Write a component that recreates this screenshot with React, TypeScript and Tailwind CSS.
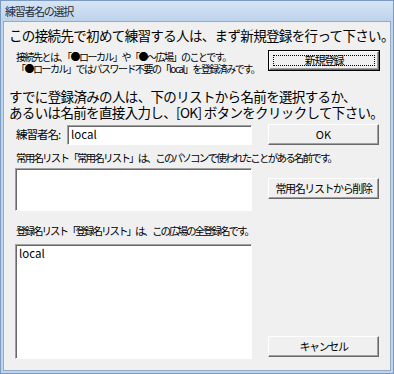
import React from 'react'

const raised =
	'bg-[#f0f0f0] border border-t-white border-l-white border-r-[#696969] border-b-[#696969] shadow-[inset_-1px_-1px_0_#a0a0a0] flex items-center justify-center text-[11px] tracking-[-1.4px] text-black'

const sunken =
	'bg-white border border-t-[#a0a0a0] border-l-[#a0a0a0] border-r-white border-b-white shadow-[inset_1px_1px_0_#696969]'

function App() {
	return (
		<div className="w-[394px] h-[374px] flex flex-col bg-[#c0d5ec] border border-[#7b9bc2] font-['Noto_Sans_CJK_JP',sans-serif] text-black">
			<div className="h-[20px] flex items-center pl-[4px] bg-gradient-to-b from-[#d6e5f5] to-[#bdd3eb]">
				<span className="text-[11px] tracking-[-1.3px] text-[#1e2a3a]">練習者名の選択</span>
			</div>

			<div className="flex-1 mx-[2px] mb-[2px] border border-[#93abc8] bg-[#f0f0f0] flex flex-col">
				<h1 className="mt-[5px] pl-[5px] text-[13.5px] leading-[16px] tracking-[-0.65px] whitespace-nowrap">
					この接続先で初めて練習する人は、まず新規登録を行って下さい。
				</h1>

				<div className="mt-[7px] flex items-start pl-[12px] pr-[10px]">
					<div className="mt-[1px] text-[10px] leading-[12px] tracking-[-1.5px] whitespace-nowrap">
						<div>接続先とは、「●ローカル」や「●～広場」のことです。</div>
						<div>「●ローカル」ではパスワード不要の「local」を登録済みです。</div>
					</div>
					<div className="ml-auto w-[112px] h-[21px] border border-black">
						<div className={raised + ' w-full h-full relative'}>
							<span className="absolute inset-[3px] border border-dotted border-black" />
							新規登録
						</div>
					</div>
				</div>

				<div className="mt-[13px] pl-[5px] text-[13.5px] leading-[16px] tracking-[-0.65px] whitespace-nowrap">
					<div>すでに登録済みの人は、下のリストから名前を選択するか、</div>
					<div>あるいは名前を直接入力し、[OK] ボタンをクリックして下さい。</div>
				</div>

				<div className="mt-[4px] flex items-center pl-[12px] pr-[11px]">
					<span className="w-[51px] text-[11.5px] tracking-[-1px] whitespace-nowrap">練習者名:</span>
					<div className={sunken + ' w-[185px] h-[20px] mt-[1px] flex items-center pl-[3px] text-[11.5px]'}>
						local
					</div>
					<div className={raised + ' ml-auto w-[111px] h-[21px] tracking-normal'}>OK</div>
				</div>

				<div className="mt-[7px] pl-[12px] text-[10.5px] leading-[12px] tracking-[-1.8px] whitespace-nowrap">
					常用名リスト「常用名リスト」は、このパソコンで使われたことがある名前です。
				</div>

				<div className="mt-[4px] flex items-start pl-[11px] pr-[11px]">
					<div className={sunken + ' w-[237px] h-[43px]'} />
					<div className={raised + ' ml-auto mt-[10px] w-[111px] h-[21px]'}>常用名リストから削除</div>
				</div>

				<div className="mt-[14px] pl-[12px] text-[10.5px] leading-[12px] tracking-[-2px] whitespace-nowrap">
					登録名リスト「登録名リスト」は、この広場の全登録名です。
				</div>

				<div className="mt-[7px] flex items-end pl-[11px] pr-[11px]">
					<div className={sunken + ' w-[237px] h-[115px] pl-[3px] pt-[1px] text-[11.5px] leading-[14px]'}>local</div>
					<div className={raised + ' ml-auto mb-[2px] w-[111px] h-[21px]'}>キャンセル</div>
				</div>
			</div>
		</div>
	)
}

export default App
